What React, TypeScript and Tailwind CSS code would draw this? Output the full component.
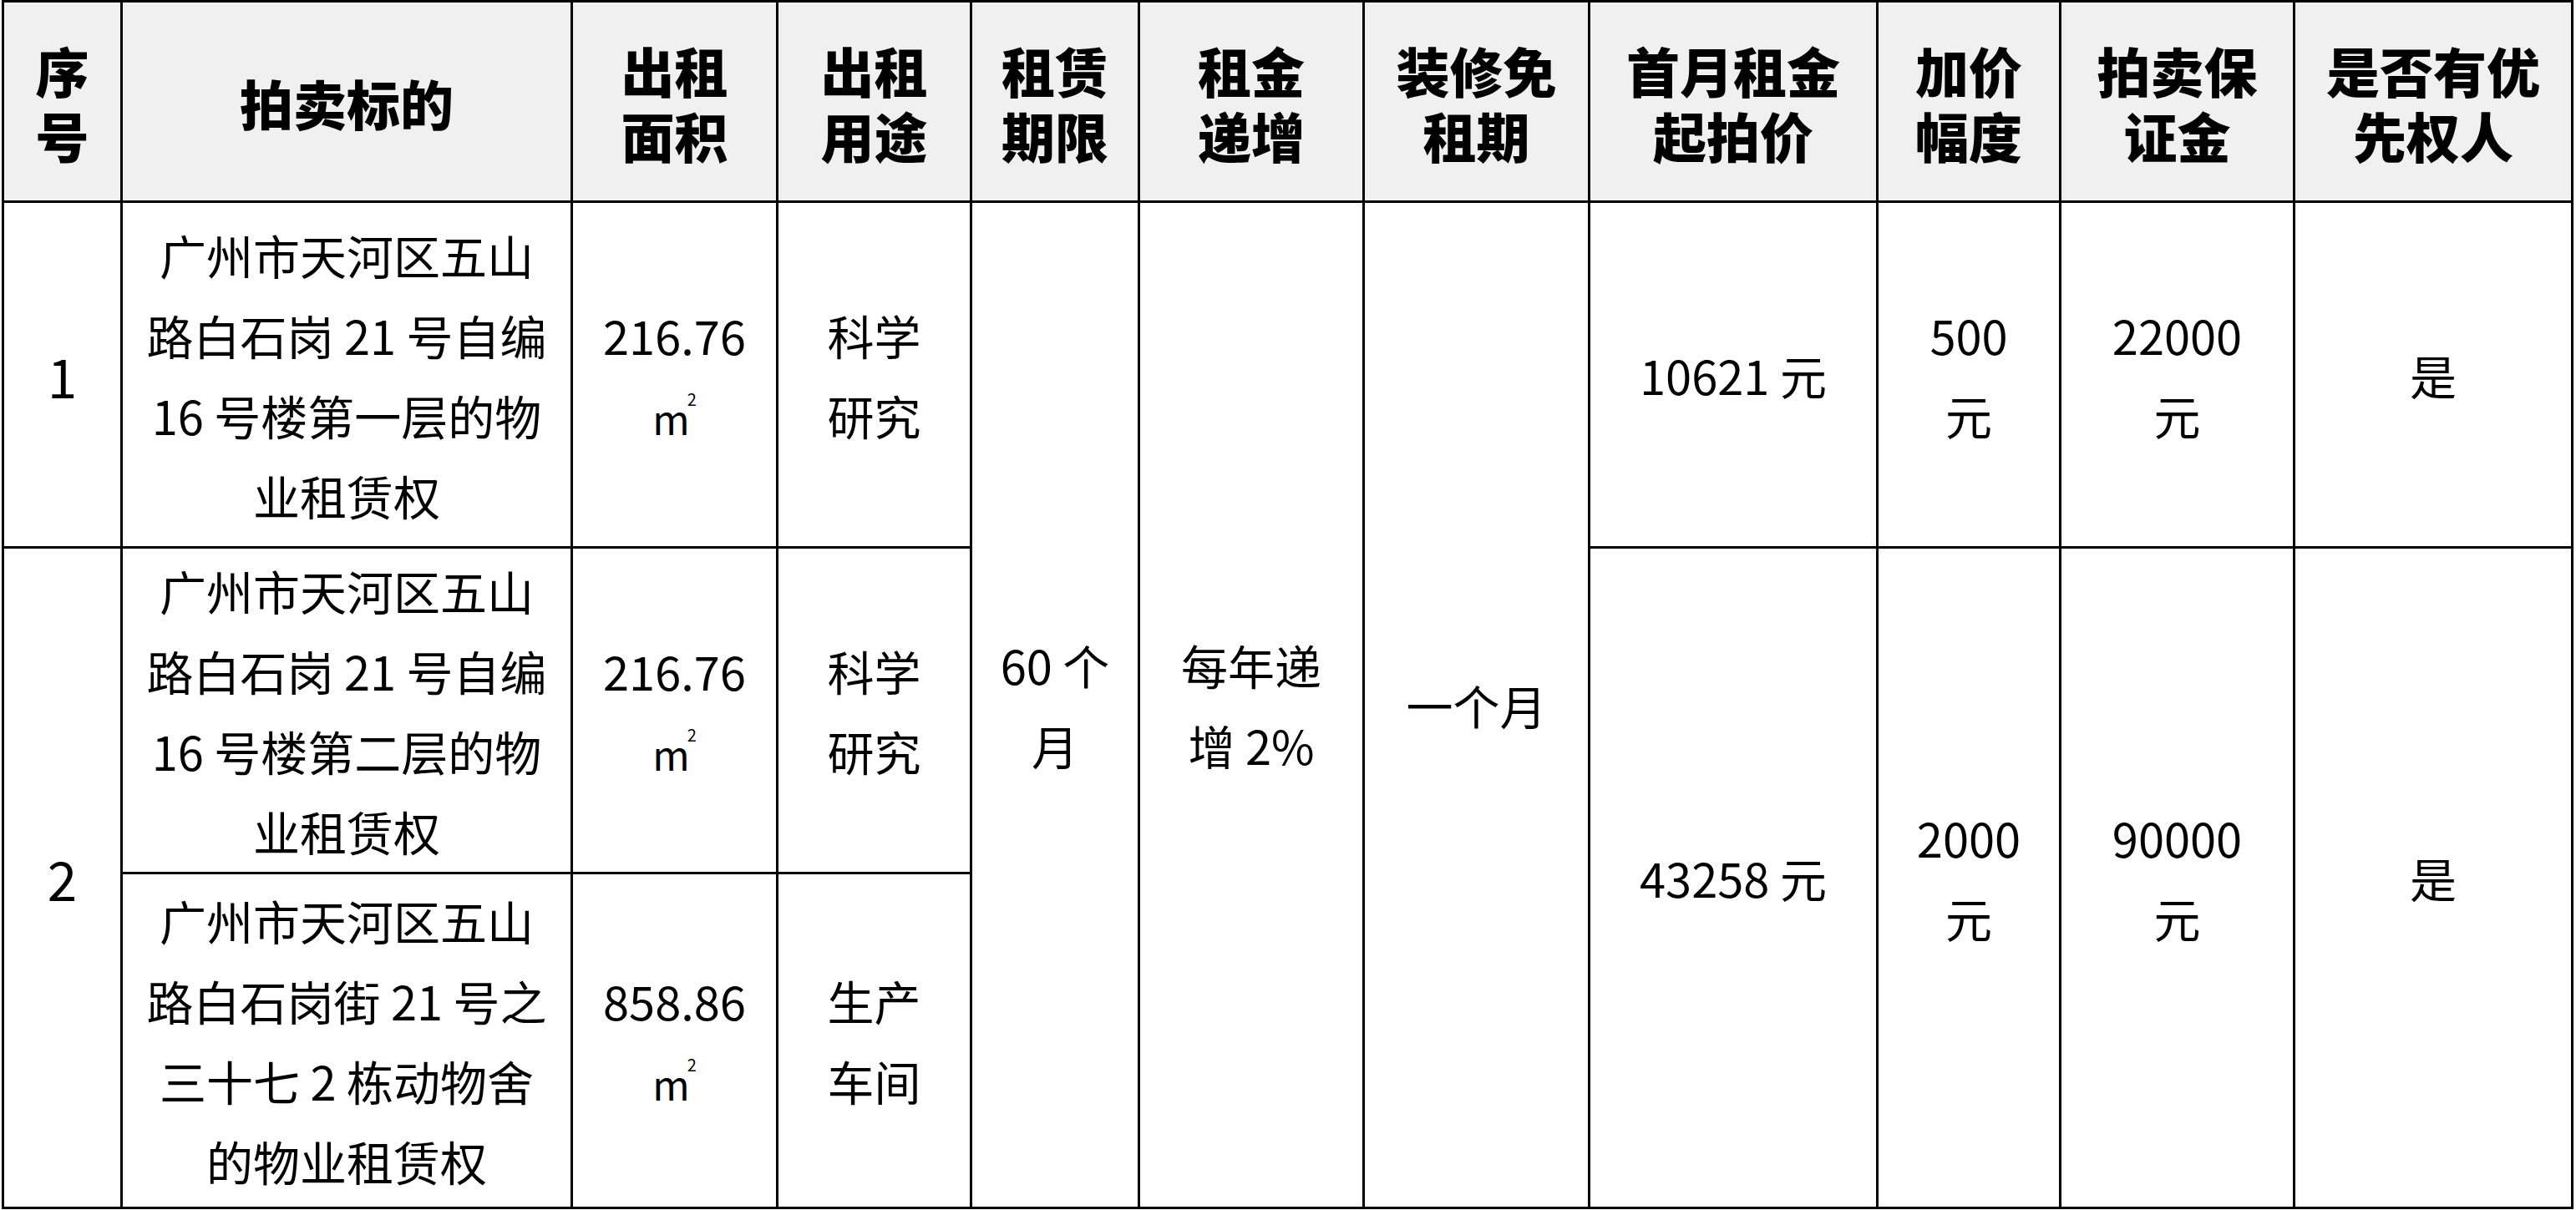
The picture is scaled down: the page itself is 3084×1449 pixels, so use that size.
import React from "react";

const font = {
  fontFamily: '"Noto Sans CJK SC", "Noto Sans", sans-serif',
};

interface CellProps {
  children: React.ReactNode;
  rowSpan?: number;
  className?: string;
}

const Th: React.FC<CellProps> = ({ children, className }) => {
  return (
    <th
      className={
        "border-[3px] border-black bg-[#f0f0f0] p-0 text-center align-middle text-[64px] font-black leading-[78px] text-black " +
        (className || "")
      }
    >
      {children}
    </th>
  );
};

const Td: React.FC<CellProps> = ({ children, rowSpan, className }) => {
  return (
    <td
      rowSpan={rowSpan}
      className={
        "border-[3px] border-black bg-white p-0 text-center align-middle text-[56px] font-normal leading-[96px] text-black " +
        (className || "")
      }
    >
      {children}
    </td>
  );
};

// square metre mark, small m with a raised 2
const Sqm = () => (
  <span className="inline-flex items-start leading-none">
    <span className="text-[48px] leading-none">m</span>
    <span className="-ml-[3px] -mt-[8px] text-[20px] leading-none">2</span>
  </span>
);

export default function App() {
  return (
    <div className="min-h-screen bg-white" style={font}>
      <table className="ml-[2px] w-[3079px] table-fixed border-collapse">
        <colgroup>
          <col className="w-[142px]" />
          <col className="w-[539px]" />
          <col className="w-[246px]" />
          <col className="w-[232px]" />
          <col className="w-[201px]" />
          <col className="w-[269px]" />
          <col className="w-[270px]" />
          <col className="w-[345px]" />
          <col className="w-[219px]" />
          <col className="w-[280px]" />
          <col className="w-[333px]" />
        </colgroup>
        <thead>
          <tr className="h-[240px]">
            <Th>
              序<br />号
            </Th>
            <Th>拍卖标的</Th>
            <Th>
              出租<br />面积
            </Th>
            <Th>
              出租<br />用途
            </Th>
            <Th>
              租赁<br />期限
            </Th>
            <Th>
              租金<br />递增
            </Th>
            <Th>
              装修免<br />租期
            </Th>
            <Th>
              首月租金<br />起拍价
            </Th>
            <Th>
              加价<br />幅度
            </Th>
            <Th>
              拍卖保<br />证金
            </Th>
            <Th>
              是否有优<br />先权人
            </Th>
          </tr>
        </thead>
        <tbody>
          <tr className="h-[414px]">
            <Td className="text-[64px]">1</Td>
            <Td>
              广州市天河区五山
              <br />
              路白石岗 21 号自编
              <br />
              16 号楼第一层的物
              <br />
              业租赁权
            </Td>
            <Td>
              216.76
              <br />
              <Sqm />
            </Td>
            <Td>
              科学
              <br />
              研究
            </Td>
            <Td rowSpan={3}>
              60 个
              <br />月
            </Td>
            <Td rowSpan={3}>
              每年递
              <br />增 2%
            </Td>
            <Td rowSpan={3}>一个月</Td>
            <Td>10621 元</Td>
            <Td>
              500
              <br />元
            </Td>
            <Td>
              22000
              <br />元
            </Td>
            <Td>是</Td>
          </tr>
          <tr className="h-[390px]">
            <Td rowSpan={2} className="text-[64px]">
              2
            </Td>
            <Td>
              广州市天河区五山
              <br />
              路白石岗 21 号自编
              <br />
              16 号楼第二层的物
              <br />
              业租赁权
            </Td>
            <Td>
              216.76
              <br />
              <Sqm />
            </Td>
            <Td>
              科学
              <br />
              研究
            </Td>
            <Td rowSpan={2}>43258 元</Td>
            <Td rowSpan={2}>
              2000
              <br />元
            </Td>
            <Td rowSpan={2}>
              90000
              <br />元
            </Td>
            <Td rowSpan={2}>是</Td>
          </tr>
          <tr className="h-[401px]">
            <Td>
              广州市天河区五山
              <br />
              路白石岗街 21 号之
              <br />
              三十七 2 栋动物舍
              <br />
              的物业租赁权
            </Td>
            <Td>
              858.86
              <br />
              <Sqm />
            </Td>
            <Td>
              生产
              <br />
              车间
            </Td>
          </tr>
        </tbody>
      </table>
    </div>
  );
}
